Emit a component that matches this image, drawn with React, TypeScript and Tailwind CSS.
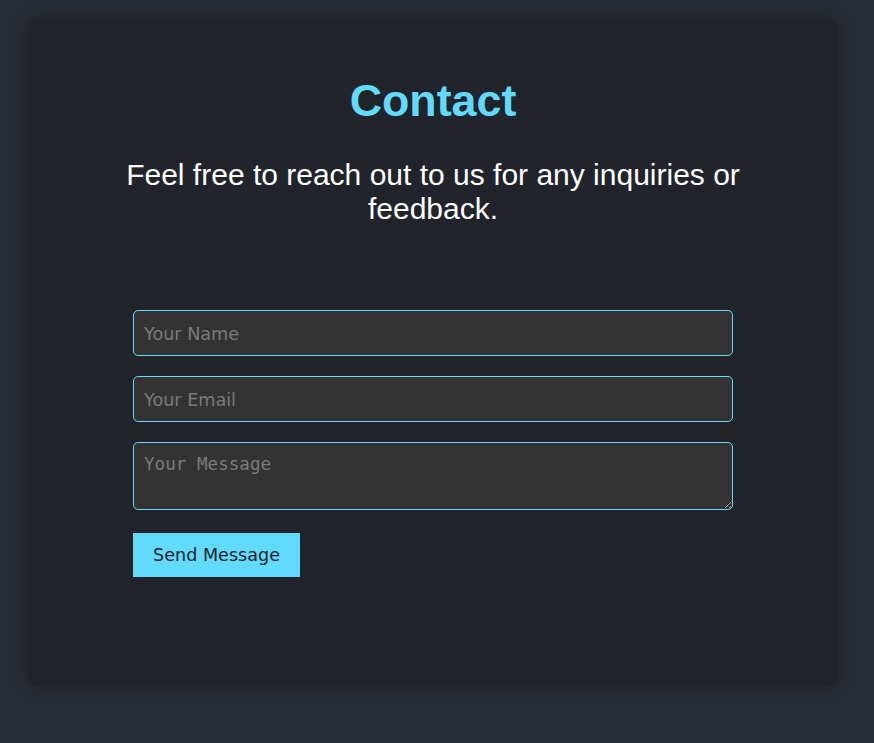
export default function App() {
  const ui = { fontFamily: '"DejaVu Sans", Verdana, sans-serif' };
  return (
    <div className="min-h-[743px] w-full bg-[#282c34] pt-[19px] pb-[57px]">
      <div
        className="ml-[28px] flex h-[667px] w-[810px] flex-col items-center rounded-[10px] bg-[#21252b] px-10 pt-[56px] shadow-[0_0_20px_rgba(0,0,0,0.25)]"
        style={{ fontFamily: '"Liberation Sans", Arial, sans-serif' }}
      >
        <h1 className="text-[44.8px] font-bold leading-[50px] text-[#61dafb]">Contact</h1>
        <p className="mt-[33px] text-center text-[30px] leading-[34px] text-white">
          Feel free to reach out to us for any inquiries or feedback.
        </p>
        <form className="mt-[84px] flex w-[600px] flex-col" onSubmit={(e) => e.preventDefault()}>
          <input
            type="text"
            placeholder="Your Name"
            className="h-[46px] w-full rounded-[5px] border border-[#61dafb] bg-[#333333] px-[10px] pt-[2px] text-[17.6px] text-white outline-none placeholder:text-[#7a7a7a]"
            style={ui}
          />
          <input
            type="email"
            placeholder="Your Email"
            className="mt-[20px] h-[46px] w-full rounded-[5px] border border-[#61dafb] bg-[#333333] px-[10px] pt-[2px] text-[17.6px] text-white outline-none placeholder:text-[#7a7a7a]"
            style={ui}
          />
          <textarea
            placeholder="Your Message"
            className="mt-[20px] h-[68px] w-full resize-y rounded-[5px] border border-[#61dafb] bg-[#333333] px-[10px] pt-[11px] pb-[9px] text-[17.6px] leading-[21px] text-white outline-none placeholder:text-[#7a7a7a]"
            style={{ fontFamily: '"DejaVu Sans Mono", monospace' }}
          />
          <div className="mt-[23px]">
            <button
              type="submit"
              className="h-[44px] bg-[#61dafb] px-5 pt-[1px] text-[17.6px] text-[#21252b]"
              style={ui}
            >
              Send Message
            </button>
          </div>
        </form>
      </div>
    </div>
  );
}
